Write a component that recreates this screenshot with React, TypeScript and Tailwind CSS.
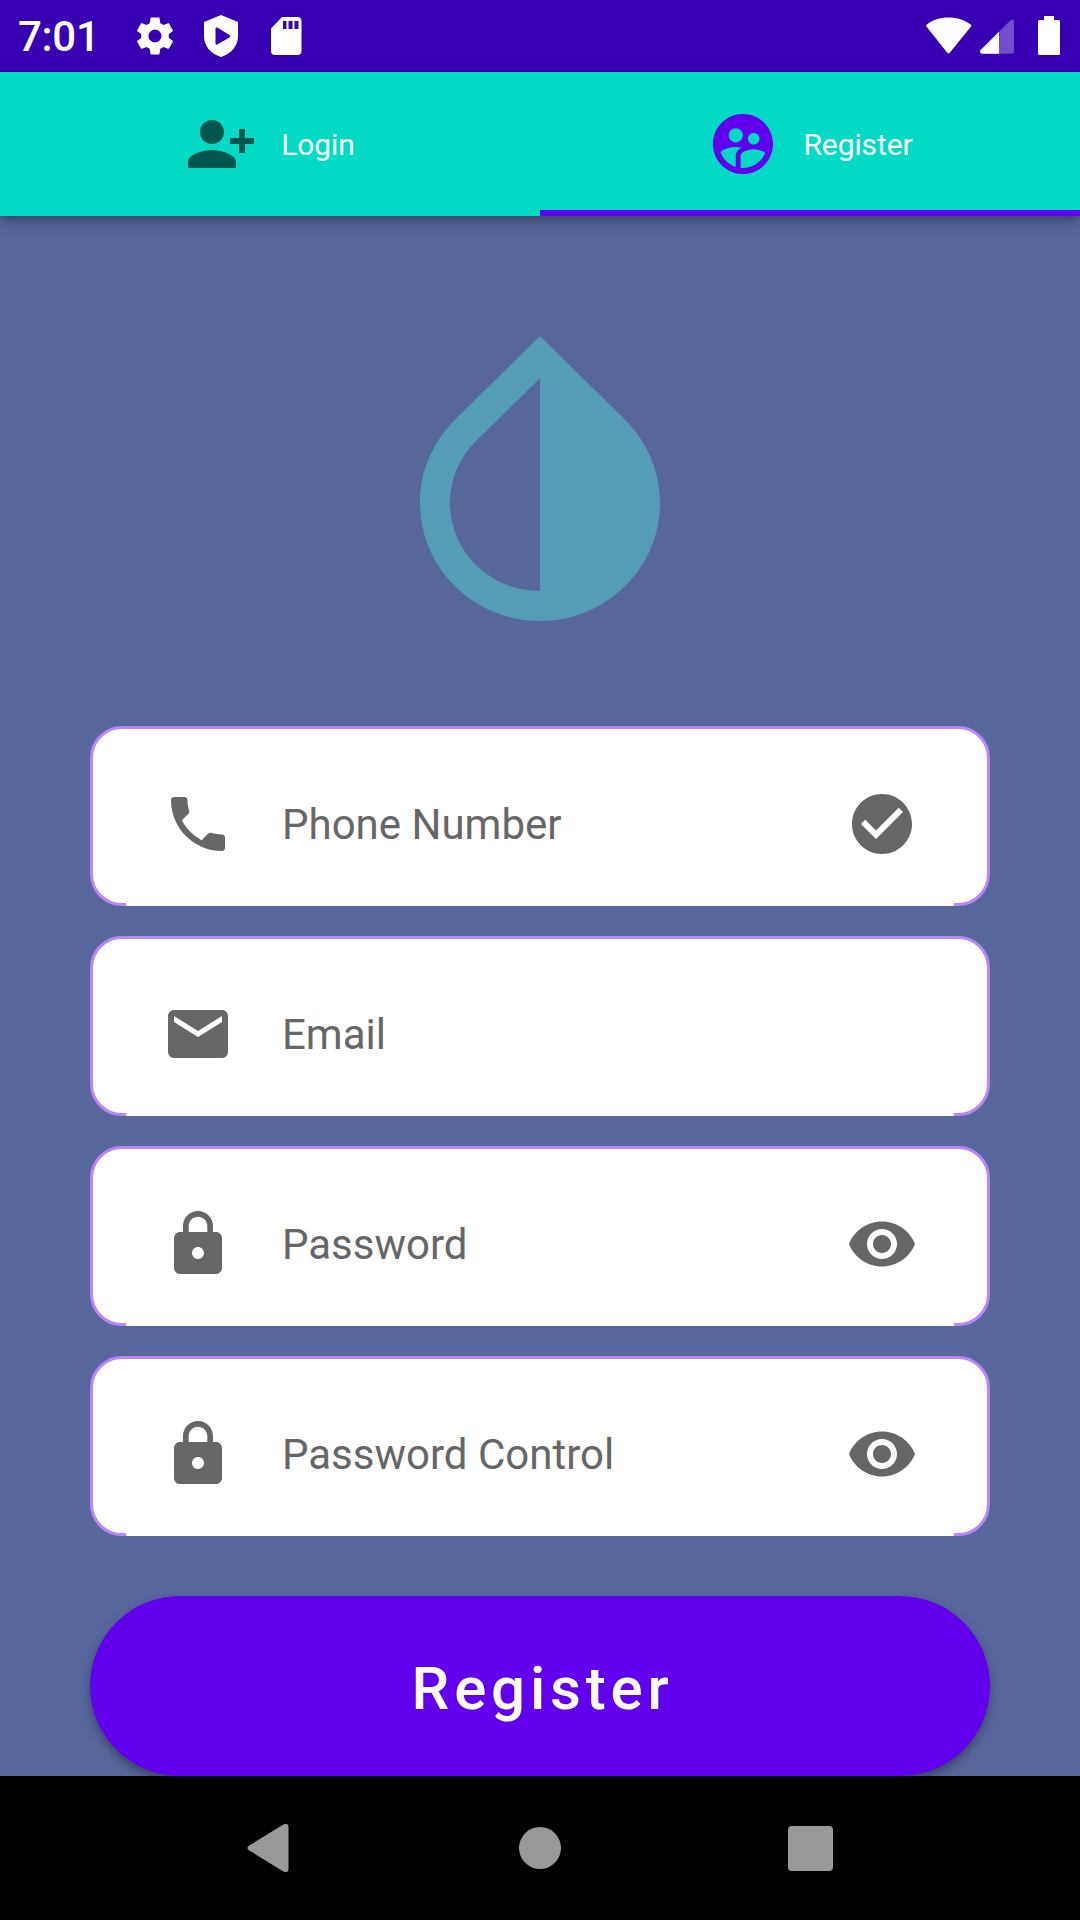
import React from "react";
import {
  MdCheckCircle,
  MdEmail,
  MdInvertColors,
  MdLock,
  MdPersonAddAlt1,
  MdPhone,
  MdRemoveRedEye,
  MdSupervisedUserCircle,
} from "react-icons/md";

type IconType = React.ComponentType<{ className?: string }>;

function StatusBar() {
  return (
    <header className="flex h-[72px] shrink-0 items-center justify-between bg-[#3700B3] text-white">
      <div className="flex items-center pl-[18px]">
        <span className="w-[114px] pt-[2px] text-[42px] leading-[72px] font-medium tracking-[-0.3px]">7:01</span>
        <svg className="size-[46px]" viewBox="0 0 24 24" fill="currentColor">
          <path d="M19.14 12.94c.04-.3.06-.61.06-.94 0-.32-.02-.64-.07-.94l2.03-1.58c.18-.14.23-.41.12-.61l-1.92-3.32c-.12-.22-.37-.29-.59-.22l-2.39.96c-.5-.38-1.03-.7-1.62-.94l-.36-2.54c-.04-.24-.24-.41-.48-.41h-3.84c-.24 0-.43.17-.47.41l-.36 2.54c-.59.24-1.13.57-1.62.94l-2.39-.96c-.22-.08-.47 0-.59.22L2.74 8.87c-.12.21-.08.47.12.61l2.03 1.58c-.05.3-.09.63-.09.94s.02.64.07.94l-2.03 1.58c-.18.14-.23.41-.12.61l1.92 3.32c.12.22.37.29.59.22l2.39-.96c.5.38 1.03.7 1.62.94l.36 2.54c.05.24.24.41.48.41h3.84c.24 0 .44-.17.47-.41l.36-2.54c.59-.24 1.13-.56 1.62-.94l2.39.96c.22.08.47 0 .59-.22l1.92-3.32c.12-.22.07-.47-.12-.61l-2.01-1.58zM12 15.4a3.4 3.4 0 1 1 0-6.8 3.4 3.4 0 0 1 0 6.8z" />
        </svg>
        <svg className="ml-[25px] h-[44px] w-[36px]" viewBox="0 0 36 44" fill="currentColor" fillRule="evenodd">
          <path d="M18 1L35 8V22C35 32 28.500 39.500 18 43C7.500 39.500 1 32 1 22V8ZM12.500 14.500V29.500Q12.500 31.500 14.300 30.500L26.500 23.500Q27.800 22 26.500 21L14.300 13.500Q12.500 13 12.500 14.500Z" />
        </svg>
        <svg className="ml-[32px] h-[38px] w-[32px]" viewBox="0 0 32 38" fill="currentColor" fillRule="evenodd">
          <path d="M11 0H26.500Q30.500 0 30.500 4V34Q30.500 38 26.500 38H4Q0 38 0 34V11.500ZM12 4V12H15.500V4ZM17.500 4V12H21.500V4ZM23.500 4V12H27.500V4Z" />
        </svg>
      </div>
      <div className="flex items-center pr-[20px] pb-px">
        <svg className="h-[38px] w-[46px]" viewBox="0 0 46 38" fill="currentColor">
          <path d="M22.500 .5C14 .5 6.500 3 .8 7.500Q-.3 8.500 .6 9.700L21.300 35.700Q22.500 37.200 23.700 35.700L44.900 9.700Q45.800 8.500 44.700 7.500C38.500 3 31 .5 22.500 .5Z" />
        </svg>
        <svg className="ml-[8px] h-[38px] w-[34px]" viewBox="0 0 34 38" fill="currentColor">
          <path fillOpacity=".3" d="M30.500 3.200Q34 1.200 34 4.700V34.700Q34 36.700 32 36.700H2Q-.8 36.200 .5 33.200Z" />
          <path d="M19 14.700V36.700H2Q-.8 36.200 .5 33.200Z" />
        </svg>
        <svg className="ml-[24px] h-[39px] w-[22px]" viewBox="0 0 22 39" fill="currentColor">
          <path d="M6 0H16V4H20.500Q22 4 22 5.500V37.500Q22 39 20.500 39H1.500Q0 39 0 37.500V5.500Q0 4 1.500 4H6Z" />
        </svg>
      </div>
    </header>
  );
}

function Tabs() {
  return (
    <nav className="relative z-10 grid h-[144px] shrink-0 grid-cols-2 bg-[#03DAC5] text-[30px] tracking-[-0.1px] text-white shadow-[0_4px_12px_rgba(0,0,0,0.38)]">
      <button className="flex items-center justify-center gap-6">
        <MdPersonAddAlt1 className="size-[72px] text-[#01574F]" />
        Login
      </button>
      <button className="flex items-center justify-center gap-6 border-b-[6px] border-[#6200EE] pt-[6px]">
        <MdSupervisedUserCircle className="size-[72px] text-[#6200EE]" />
        Register
      </button>
    </nav>
  );
}

function Field({ label, icon: Icon, action: Action }: { label: string; icon: IconType; action?: IconType }) {
  return (
    <div className="relative flex h-[180px] items-center rounded-[32px] border-[3px] border-[#BB86FC] bg-white pr-[69px] pl-[69px] pt-[16px] text-[#666666]">
      <Icon className="size-[72px]" />
      <span className="ml-12 flex-1 pt-[2px] text-[42px] leading-[50px]">{label}</span>
      {Action && <Action className="size-[72px]" />}
      <span className="absolute right-[33px] -bottom-[3px] left-[33px] h-[3px] bg-white" />
    </div>
  );
}

export default function App() {
  return (
    <div className="flex h-[1920px] w-[1080px] flex-col overflow-hidden bg-[#57679C] font-[Roboto,sans-serif]">
      <StatusBar />
      <Tabs />
      <main className="flex h-[1560px] shrink-0 flex-col overflow-hidden px-[90px] pt-[90px]">
        <MdInvertColors className="size-[360px] shrink-0 self-center text-[#559DB6]" />
        <form className="mt-[60px] flex flex-col gap-[30px]">
          <Field label="Phone Number" icon={MdPhone} action={MdCheckCircle} />
          <Field label="Email" icon={MdEmail} />
          <Field label="Password" icon={MdLock} action={MdRemoveRedEye} />
          <Field label="Password Control" icon={MdLock} action={MdRemoveRedEye} />
          <button
            type="button"
            className="mt-[30px] h-[180px] rounded-full bg-[#6200EE] pt-[6px] pl-[5px] text-[60px] font-medium tracking-[4.8px] text-white shadow-[0_5px_10px_rgba(0,0,0,0.34)]"
          >
            Register
          </button>
        </form>
      </main>
      <footer className="flex flex-1 items-center justify-center gap-[227px] bg-black text-[#999999]">
        <svg className="h-[48px] w-[45px]" viewBox="0 0 45 48" fill="currentColor">
          <path d="M1.500 22Q-.7 24 1.500 26L36.500 47.500Q41.500 49.500 41.500 45V3Q41.500 -1.500 36.500 .5Z" />
        </svg>
        <span className="size-[42px] rounded-full bg-[#999999]" />
        <span className="size-[45px] rounded-[4px] bg-[#999999]" />
      </footer>
    </div>
  );
}
